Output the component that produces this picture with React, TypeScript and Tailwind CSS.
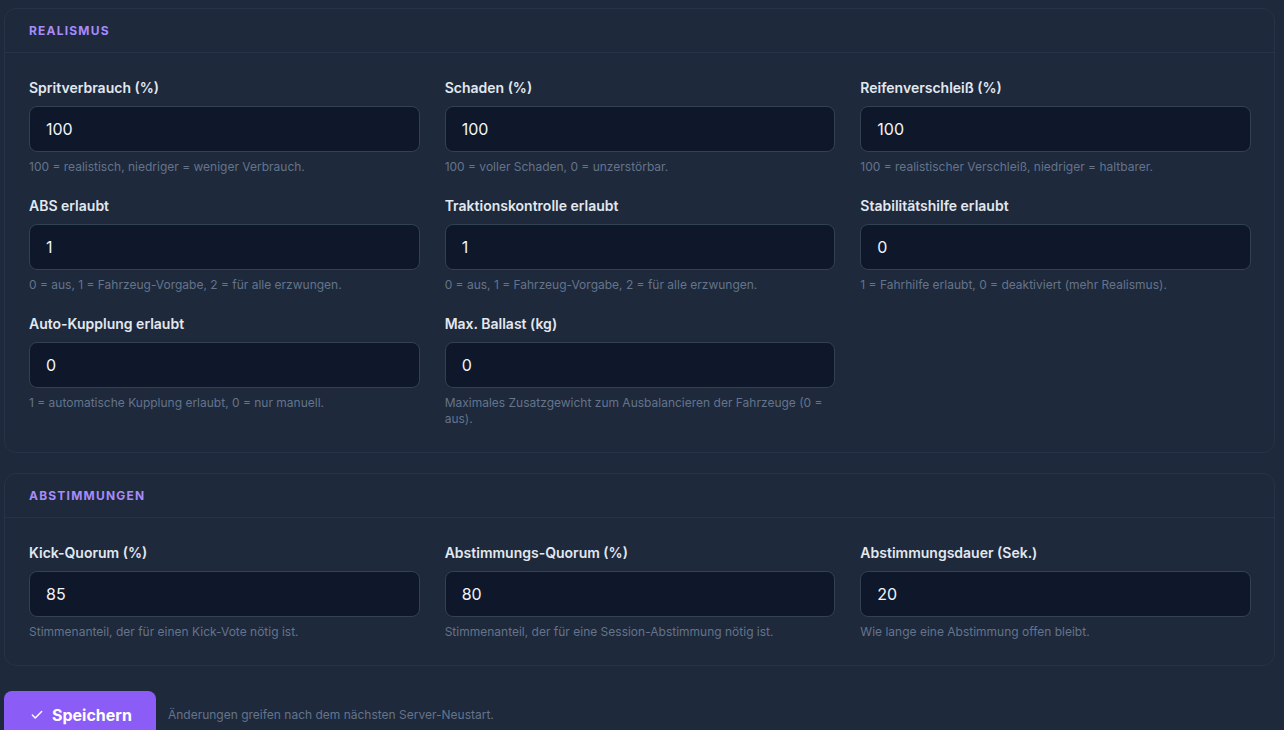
import React from 'react';
import { Check } from 'lucide-react';

type Field = { label: string; value: string; hint: string };

const realismus: Field[] = [
  { label: 'Spritverbrauch (%)', value: '100', hint: '100 = realistisch, niedriger = weniger Verbrauch.' },
  { label: 'Schaden (%)', value: '100', hint: '100 = voller Schaden, 0 = unzerstörbar.' },
  { label: 'Reifenverschleiß (%)', value: '100', hint: '100 = realistischer Verschleiß, niedriger = haltbarer.' },
  { label: 'ABS erlaubt', value: '1', hint: '0 = aus, 1 = Fahrzeug-Vorgabe, 2 = für alle erzwungen.' },
  { label: 'Traktionskontrolle erlaubt', value: '1', hint: '0 = aus, 1 = Fahrzeug-Vorgabe, 2 = für alle erzwungen.' },
  { label: 'Stabilitätshilfe erlaubt', value: '0', hint: '1 = Fahrhilfe erlaubt, 0 = deaktiviert (mehr Realismus).' },
  { label: 'Auto-Kupplung erlaubt', value: '0', hint: '1 = automatische Kupplung erlaubt, 0 = nur manuell.' },
  { label: 'Max. Ballast (kg)', value: '0', hint: 'Maximales Zusatzgewicht zum Ausbalancieren der Fahrzeuge (0 = aus).' },
];

const abstimmungen: Field[] = [
  { label: 'Kick-Quorum (%)', value: '85', hint: 'Stimmenanteil, der für einen Kick-Vote nötig ist.' },
  { label: 'Abstimmungs-Quorum (%)', value: '80', hint: 'Stimmenanteil, der für eine Session-Abstimmung nötig ist.' },
  { label: 'Abstimmungsdauer (Sek.)', value: '20', hint: 'Wie lange eine Abstimmung offen bleibt.' },
];

function Section({ title, fields }: { title: string; fields: Field[] }) {
  return (
    <section className="rounded-xl border border-[#273348] bg-[#1e293b]">
      <div className="px-6 pt-[14px] pb-[13px] border-b border-[#273348]">
        <h2 className="text-[12px] leading-4 font-bold tracking-[0.1em] uppercase text-[#a78bfa]">{title}</h2>
      </div>
      <div className="grid grid-cols-3 gap-x-[25px] gap-y-[21px] pl-6 pr-[23px] pt-[25px] pb-[25px]">
        {fields.map((f) => (
          <div key={f.label} className="flex flex-col">
            <label className="text-[14px] leading-5 font-semibold text-[#e2e8f0] mb-2">{f.label}</label>
            <input
              defaultValue={f.value}
              className="h-[46px] w-full rounded-lg border border-[#334155] bg-[#0f172a] px-4 text-[16px] text-[#f1f5f9] outline-none"
            />
            <p className="mt-[7px] text-[12px] leading-4 text-[#64748b]">{f.hint}</p>
          </div>
        ))}
      </div>
    </section>
  );
}

export default function App() {
  return (
    <div
      className="min-h-screen bg-[#1e293b] pl-1 pr-[9px] pt-2 pb-6 space-y-5"
      style={{ fontFamily: 'Inter, "Noto Sans", sans-serif' }}
    >
      <Section title="Realismus" fields={realismus} />
      <Section title="Abstimmungen" fields={abstimmungen} />
      <div className="flex items-center gap-3 pt-[5px]">
        <button className="flex items-center gap-2 h-12 pl-[26px] pr-6 rounded-lg bg-[#8b5cf6] text-white text-[16px] font-bold">
          <Check className="w-[14px] h-[14px]" strokeWidth={2.5} />
          Speichern
        </button>
        <span className="text-[12px] text-[#64748b]">Änderungen greifen nach dem nächsten Server-Neustart.</span>
      </div>
    </div>
  );
}
